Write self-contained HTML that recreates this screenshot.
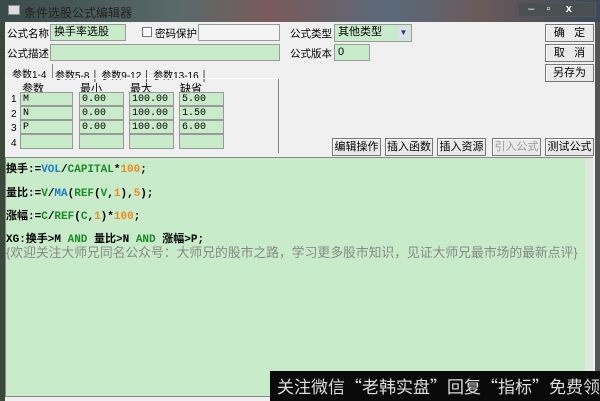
<!DOCTYPE html>
<html><head><meta charset="utf-8"><style>
*{margin:0;padding:0;box-sizing:border-box}
body{width:600px;height:401px;overflow:hidden;background:#f0f0f0;position:relative;font-family:"Liberation Sans","Noto Sans CJK SC",sans-serif;font-size:11px;color:#000}
.a{position:absolute}
.inp{position:absolute;background:#c8ecc9;border:1px solid #9a9a9a;font-size:11px;padding-left:3px;line-height:14px}
.btn{position:absolute;background:#eaeaea;border:1px solid #777;box-shadow:inset 1px 1px #fff;text-align:center;font-size:11px;line-height:16px}
.code{font-family:"Liberation Mono","Noto Sans CJK SC",monospace;font-weight:bold;font-size:11px;position:absolute;left:8px;white-space:pre}
.g{color:#1a8a2a}.b{color:#1a7acc}.o{color:#f08a1a}
.cell{position:absolute;background:#c8ecc9;border:1px solid #999;font-family:'Liberation Mono',monospace;font-size:10px;line-height:13px;padding-left:2px;height:14px}
</style></head><body>
<div class="a" style="left:0;top:0;width:600px;height:22px;background:linear-gradient(90deg,#3a4a4a,#5a6a6a 30%,#7a5a5a 45%,#5a6a7a 65%,#6a5a5a 80%,#3a4a5a)"></div>
<div class="a" style="left:8px;top:5px;width:12px;height:10px;background:#ddd;border:1px solid #888"></div>
<div class="a" style="left:24px;top:4px;color:#222;font-size:12px">条件选股公式编辑器</div>
<div class="a" style="left:518px;top:2px;width:78px;height:15px;border:1px solid #555;background:#4a5050;color:#fff;font-size:11px;line-height:13px">&nbsp;&nbsp;&nbsp;–&nbsp;&nbsp;&nbsp;&nbsp;▫&nbsp;&nbsp;&nbsp;&nbsp;&nbsp;<b>x</b></div>
<div class="a" style="left:0;top:22px;width:5px;height:379px;background:#3a4a3a"></div>
<div class="a" style="left:595px;top:22px;width:5px;height:379px;background:#555"></div>

<div class="a" style="left:7px;top:26px;font-size:10.5px">公式名称</div>
<div class="inp" style="left:50px;top:24px;width:76px;height:17px">换手率选股</div>
<div class="a" style="left:142px;top:27px;width:10px;height:10px;border:1px solid #777;background:#fff"></div>
<div class="a" style="left:155px;top:26px;font-size:10.5px">密码保护</div>
<div class="inp" style="left:198px;top:24px;width:82px;height:17px;background:#f4f4f4"></div>
<div class="a" style="left:290px;top:26px;font-size:10.5px">公式类型</div>
<div class="inp" style="left:334px;top:24px;width:78px;height:18px">其他类型<span style="position:absolute;right:2px;top:2px;width:11px;height:12px;background:#dde;font-size:8px;line-height:12px;text-align:center;color:#336">▼</span></div>
<div class="btn" style="left:545px;top:24px;width:49px;height:18px">确&nbsp;&nbsp;&nbsp;定</div>

<div class="a" style="left:7px;top:46px;font-size:10.5px">公式描述</div>
<div class="inp" style="left:50px;top:44px;width:230px;height:17px"></div>
<div class="a" style="left:290px;top:46px;font-size:10.5px">公式版本</div>
<div class="inp" style="left:334px;top:44px;width:36px;height:17px">0</div>
<div class="btn" style="left:545px;top:44px;width:49px;height:18px">取&nbsp;&nbsp;&nbsp;消</div>
<div class="btn" style="left:545px;top:64px;width:49px;height:18px">另存为</div>

<div class="a" style="left:12px;top:66px;font-size:10px">参数1-4</div>
<div class="a" style="left:52px;top:64px;height:14px;border-left:1px solid #888"></div>
<div class="a" style="left:55px;top:67px;font-size:10px">参数5-8 │ 参数9-12 │ 参数13-16 │</div>
<div class="a" style="left:5px;top:78px;width:274px;height:75px;border-top:1px solid #fff;border-right:1px solid #888"></div>
<div class="a" style="left:22px;top:80px">参数</div>
<div class="a" style="left:80px;top:80px">最小</div>
<div class="a" style="left:130px;top:80px">最大</div>
<div class="a" style="left:180px;top:80px">缺省</div>
<div class="a" style="left:11px;top:93px;line-height:14.5px;font-size:10px">1<br>2<br>3<br>4</div>
<div class="cell" style="left:20px;top:92px;width:53px">M</div>
<div class="cell" style="left:20px;top:106px;width:53px">N</div>
<div class="cell" style="left:20px;top:120px;width:53px">P</div>
<div class="cell" style="left:20px;top:134px;width:53px;height:15px"></div>
<div class="cell" style="left:79px;top:92px;width:45px">0.00</div>
<div class="cell" style="left:79px;top:106px;width:45px">0.00</div>
<div class="cell" style="left:79px;top:120px;width:45px">0.00</div>
<div class="cell" style="left:79px;top:134px;width:45px;height:15px"></div>
<div class="cell" style="left:129px;top:92px;width:45px">100.00</div>
<div class="cell" style="left:129px;top:106px;width:45px">100.00</div>
<div class="cell" style="left:129px;top:120px;width:45px">100.00</div>
<div class="cell" style="left:129px;top:134px;width:45px;height:15px"></div>
<div class="cell" style="left:179px;top:92px;width:45px">5.00</div>
<div class="cell" style="left:179px;top:106px;width:45px">1.50</div>
<div class="cell" style="left:179px;top:120px;width:45px">6.00</div>
<div class="cell" style="left:179px;top:134px;width:45px;height:15px"></div>

<div class="btn" style="left:332px;top:138px;width:49px;height:18px">编辑操作</div>
<div class="btn" style="left:385px;top:138px;width:48px;height:18px">插入函数</div>
<div class="btn" style="left:437px;top:138px;width:49px;height:18px">插入资源</div>
<div class="btn" style="left:492px;top:138px;width:49px;height:18px;color:#999">引入公式</div>
<div class="btn" style="left:545px;top:138px;width:49px;height:18px">测试公式</div>

<div class="a" style="left:5px;top:157px;width:588px;height:240px;background:#c8ecc9;border:1px solid #888"></div>
<div class="a" style="left:585px;top:158px;width:8px;height:238px;background:#dde8dd"></div>
<div class="code" style="top:160px;left:6px">换手:=<span class="b">VOL</span>/<span class="g">CAPITAL</span>*<span class="o">100</span>;</div>
<div class="code" style="top:184px;left:6px">量比:=<span class="g">V</span>/<span class="b">MA</span>(<span class="g">REF</span>(<span class="g">V</span>,<span class="o">1</span>),<span class="o">5</span>);</div>
<div class="code" style="top:207px;left:6px">涨幅:=<span class="g">C</span>/<span class="g">REF</span>(<span class="g">C</span>,<span class="o">1</span>)*<span class="o">100</span>;</div>
<div class="code" style="top:230px;left:6px">XG:换手&gt;M <span class="g">AND</span> 量比&gt;N <span class="g">AND</span> 涨幅&gt;P;</div>
<div class="a" style="left:6px;top:242px;color:#888;font-size:12.8px;white-space:nowrap">{欢迎关注大师兄同名公众号：大师兄的股市之路，学习更多股市知识，见证大师兄最市场的最新点评}</div>

<div class="a" style="left:270px;top:371px;width:330px;height:30px;background:#0a0a0a;color:#ddd;font-family:'Noto Sans CJK SC',sans-serif;font-size:17px;line-height:30px;padding-left:7px;white-space:nowrap">关注微信“老韩实盘”回复“指标”免费领</div>
</body></html>
